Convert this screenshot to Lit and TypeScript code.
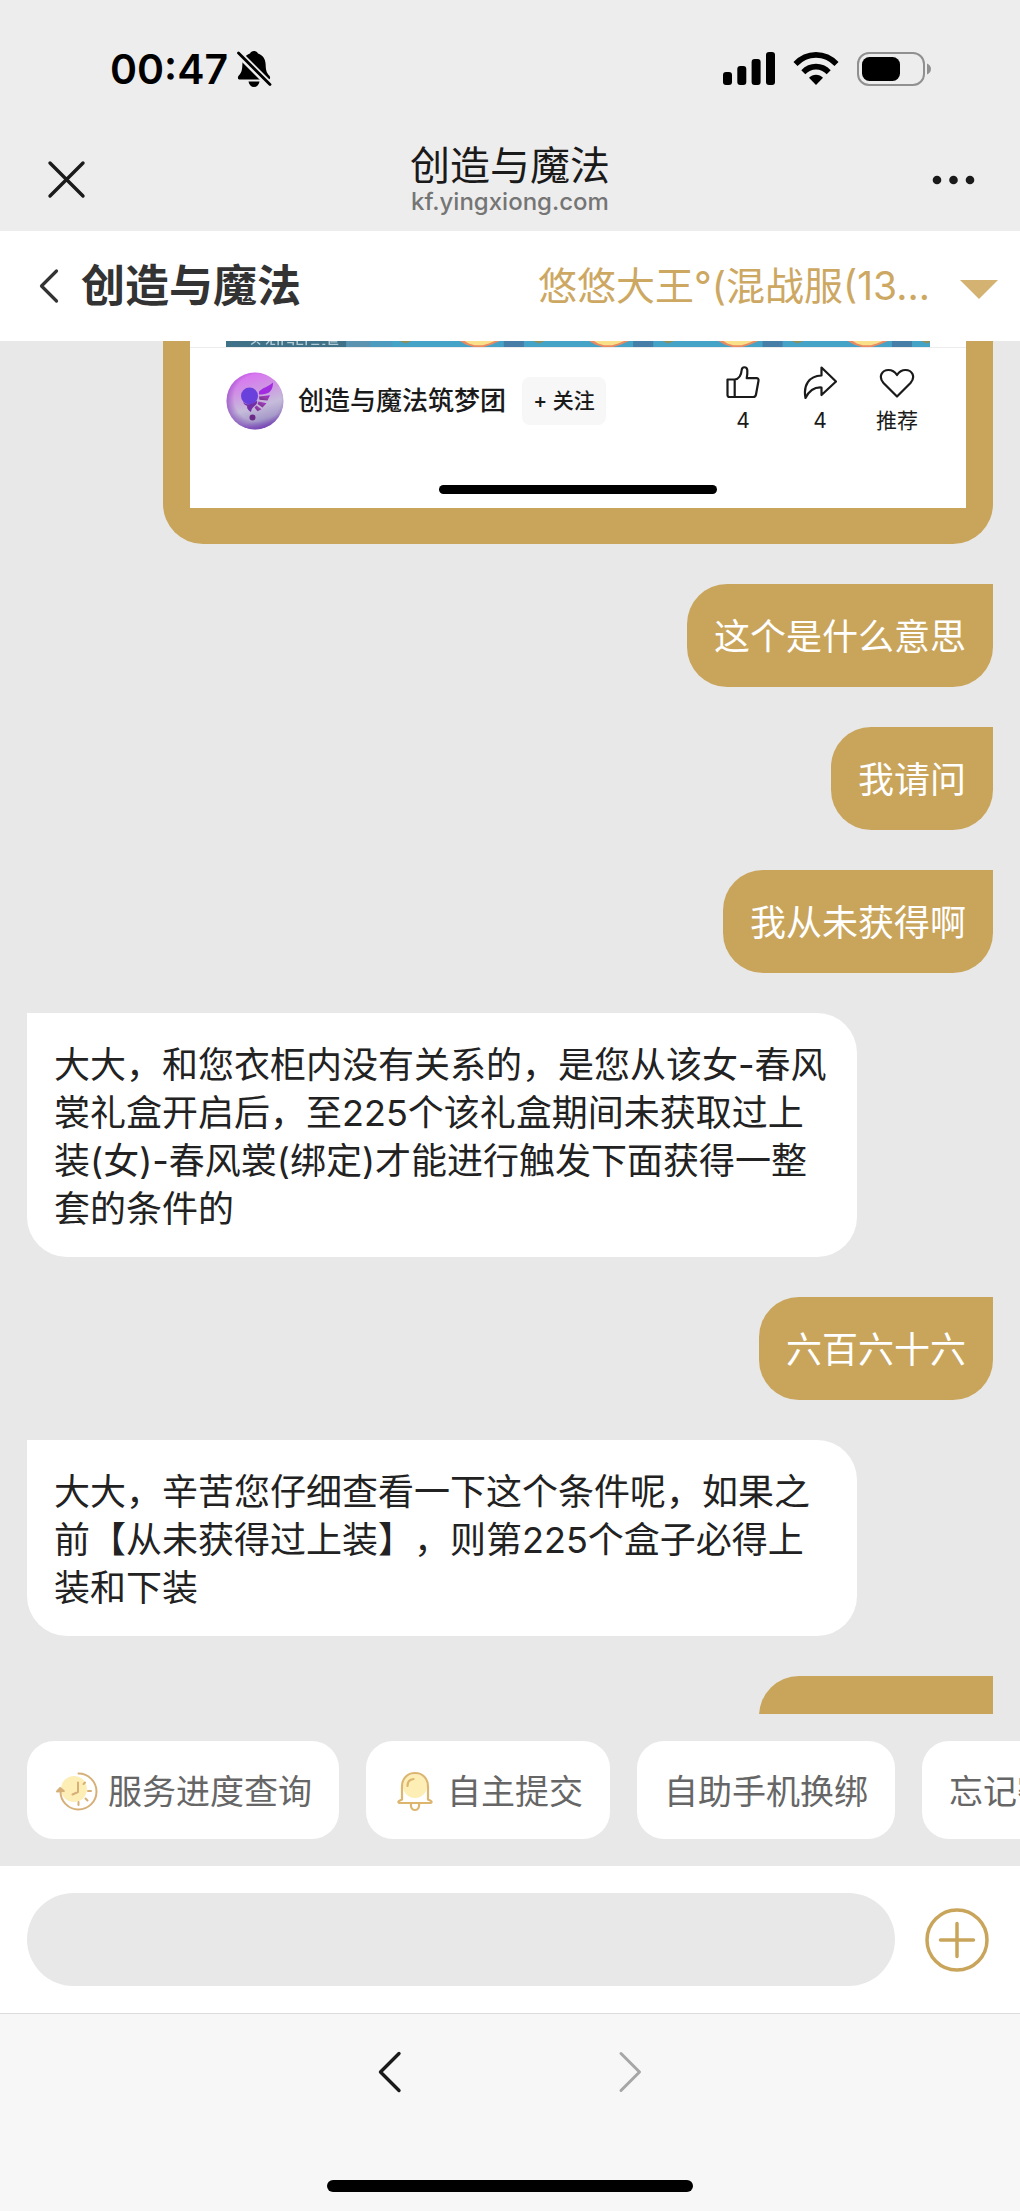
import { LitElement, html, css, svg, nothing } from "lit";
import { customElement, property } from "lit/decorators.js";

const fontStack = css`Inter, "Noto Sans CJK SC", "Liberation Sans", sans-serif`;

const reset = css`
  * {
    box-sizing: border-box;
  }
  button {
    appearance: none;
    border: 0;
    margin: 0;
    padding: 0;
    background: none;
    color: inherit;
    font: inherit;
    cursor: pointer;
  }
  svg {
    display: block;
    flex: none;
  }
`;

@customElement("status-bar")
export class StatusBar extends LitElement {
  static styles = [
    reset,
    css`
      :host {
        display: flex;
        align-items: center;
        justify-content: space-between;
        height: 138px;
        padding: 0 88px 0 110px;
        color: #000;
      }
      .left,
      .right {
        display: flex;
        align-items: center;
      }
      .left {
        gap: 8px;
      }
      .right {
        gap: 18px;
      }
      .time {
        font-size: 41px;
        line-height: 48px;
        font-weight: 600;
      }
    `,
  ];

  render() {
    return html`
      <div class="left">
        <span class="time">00:47</span>
        <svg width="36" height="38" viewBox="0 0 36 38" aria-hidden="true">
          <path d="M18 1c-2 0-3.400 1-4 2.400C9 5 6.600 9 6.400 14c-.2 6-.8 8.500-3.600 11.500C1.500 27 1.300 29.600 4 29.600h28c2.700 0 2.500-2.600 1.200-4.100-2.800-3-3.400-5.500-3.600-11.500C29.400 9 27 5 22 3.400 21.400 2 20 1 18 1z" />
          <path d="M12.500 31.500h11C23 35 20.800 37 18 37s-5-2-5.500-5.500z" />
          <path d="M-1 0L36 37" stroke="#ededed" stroke-width="7" />
          <path d="M2.500 3L34 34.500" stroke="#000" stroke-width="2.800" stroke-linecap="round" />
        </svg>
      </div>
      <div class="right">
        <svg width="52" height="34" viewBox="0 0 52 34" aria-hidden="true">
          <rect x="0" y="20" width="9" height="13" rx="3" />
          <rect x="14.300" y="14" width="9" height="19" rx="3" />
          <rect x="28.600" y="7" width="9" height="26" rx="3" />
          <rect x="43" y="0" width="9" height="33" rx="3" />
        </svg>
        <svg width="46" height="34" viewBox="0 0 46 34" aria-hidden="true">
          <g fill="none" stroke="#000" stroke-width="5.600">
            <path d="M2.500 12C14-.2 32-.2 43.500 12" />
            <path d="M10.300 20.200C17.500 12.800 28.500 12.800 35.700 20.200" />
          </g>
          <path d="M23 33l-7-7.200c3.800-4.200 10.200-4.200 14 0z" />
        </svg>
        <svg width="75" height="34" viewBox="0 0 75 34" aria-hidden="true">
          <rect x="1" y="1" width="66" height="32" rx="11" fill="none" stroke="#909090" stroke-width="2" />
          <rect x="5" y="5" width="38" height="24" rx="7.500" />
          <path d="M70 11.500c2.500 1 4 3 4 5.500s-1.500 4.500-4 5.500z" fill="#909090" />
        </svg>
      </div>
    `;
  }
}

@customElement("browser-bar")
export class BrowserBar extends LitElement {
  static styles = [
    reset,
    css`
      :host {
        display: grid;
        grid-template-columns: 1fr auto 1fr;
        align-items: center;
        height: 93px;
        padding: 0 44px 10px;
        color: #1a1a1a;
      }
      .center {
        display: flex;
        flex-direction: column;
        align-items: center;
      }
      .title {
        margin: 0;
        font-size: 40px;
        line-height: 44px;
        font-weight: 400;
      }
      .domain {
        font-size: 24px;
        line-height: 28px;
        font-weight: 500;
        color: #757575;
      }
      .more {
        justify-self: end;
      }
    `,
  ];

  render() {
    return html`
      <button aria-label="关闭">
        <svg width="44" height="44" viewBox="0 0 44 44">
          <path d="M6 5l33 33M39 5L6 38" stroke="#1a1a1a" stroke-width="3.400" stroke-linecap="round" />
        </svg>
      </button>
      <div class="center">
        <h1 class="title">创造与魔法</h1>
        <span class="domain">kf.yingxiong.com</span>
      </div>
      <button class="more" aria-label="更多">
        <svg width="44" height="44" viewBox="0 0 44 44">
          <circle cx="5" cy="22" r="4.300" fill="#1a1a1a" />
          <circle cx="21.500" cy="22" r="4.300" fill="#1a1a1a" />
          <circle cx="38" cy="22" r="4.300" fill="#1a1a1a" />
        </svg>
      </button>
    `;
  }
}

@customElement("chat-header")
export class ChatHeader extends LitElement {
  static styles = [
    reset,
    css`
      :host {
        display: flex;
        align-items: center;
        justify-content: space-between;
        height: 110px;
        padding: 0 22px 0 37px;
        background: #fff;
      }
      .back {
        display: flex;
        align-items: center;
        gap: 20px;
      }
      .name {
        font-size: 44px;
        line-height: 56px;
        font-weight: 700;
        color: #333;
      }
      .account {
        display: flex;
        align-items: center;
        gap: 30px;
        font-size: 39px;
        line-height: 56px;
        font-weight: 400;
        color: #cda863;
      }
      .account svg {
        margin-top: 5px;
      }
    `,
  ];

  render() {
    return html`
      <button class="back">
        <svg width="24" height="36" viewBox="0 0 24 36" aria-hidden="true">
          <path d="M19.500 3L4.500 18l15 15" fill="none" stroke="#333" stroke-width="3.200" stroke-linecap="round" stroke-linejoin="round" />
        </svg>
        <span class="name">创造与魔法</span>
      </button>
      <button class="account">
        <span>悠悠大王°(混战服(13...</span>
        <svg width="38" height="20" viewBox="0 0 38 20" aria-hidden="true">
          <path d="M0 1h38L19 20z" fill="#d3b272" />
        </svg>
      </button>
    `;
  }
}

@customElement("shared-post")
export class SharedPost extends LitElement {
  static styles = [
    reset,
    css`
      :host {
        display: block;
        padding-bottom: 14px;
        background: #fff;
        color: #1a1a1a;
      }
      .banner {
        border-bottom: 1px solid #ececec;
        padding: 0 36px;
      }
      .banner svg {
        width: 100%;
        height: 6px;
      }
      .row {
        display: flex;
        align-items: center;
        padding: 12px 36px 0;
        height: 93px;
      }
      .author {
        margin-left: 14px;
        font-size: 26px;
        line-height: 36px;
        font-weight: 500;
      }
      .follow {
        margin-left: 16px;
        width: 84px;
        height: 48px;
        border-radius: 8px;
        background: #f7f7f7;
        font-size: 21px;
        line-height: 48px;
        font-weight: 500;
      }
      .actions {
        display: flex;
        gap: 11px;
        margin-left: auto;
      }
      .action {
        display: flex;
        flex-direction: column;
        align-items: center;
        gap: 6px;
        width: 66px;
        font-size: 21px;
        line-height: 32px;
        font-weight: 400;
      }
      .home {
        width: 278px;
        height: 9px;
        margin: 44px auto 0;
        border-radius: 5px;
        background: #000;
      }
    `,
  ];

  private banner() {
    const flames = [253, 382, 511, 640];
    return svg`
      <rect width="702" height="7" fill="#46a3c8" />
      <rect width="120" height="7" fill="#3f7288" />
      <rect x="120" width="24" height="7" fill="#5b93b0" />
      <rect x="144" width="22" height="7" fill="#4d9cc0" />
      ${flames.map(
        (x) => svg`
          <path d="M${x - 20} 0h40l-8 4-8 3h-10l-8-3z" fill="#e98a63" />
          <path d="M${x - 15} 0h30l-6 3-6 2h-8l-6-2z" fill="#fbe08a" />
          <rect x="${x + 24}" width="20" height="7" fill="#467ea8" />
          <path d="M${x + 53} 0h12l-6 3z" fill="#8f8f5a" />`
      )}
      <path d="M173 0h12l-6 3z" fill="#8f8f5a" />
      <path d="M25 4l5-4m4 4l-3-3m9 3l3-4m2 0v4h4m3-4v5m4-5v5m5-3h6v3m4-5v4h6m3-4v5m5-1h8m3 0h3m4-4v4h9m-8-3h7" fill="none" stroke="#b4cbd3" stroke-width="1.500" />
    `;
  }

  render() {
    return html`
      <div class="banner">
        <svg viewBox="0 0 702 7" preserveAspectRatio="none" aria-hidden="true">${this.banner()}</svg>
      </div>
      <div class="row">
        <svg width="58" height="58" viewBox="0 0 58 58" aria-hidden="true">
          <defs>
            <linearGradient id="orb" x1="0.350" y1="0" x2="0.650" y2="1">
              <stop offset="0" stop-color="#dc70f4" />
              <stop offset="0.300" stop-color="#cf92e4" />
              <stop offset="0.600" stop-color="#c6bcda" />
              <stop offset="0.820" stop-color="#a79cc9" />
              <stop offset="1" stop-color="#6d48b0" />
            </linearGradient>
            <radialGradient id="glow" cx="0.550" cy="0.450" r="0.550">
              <stop offset="0.750" stop-color="#7b2fb5" stop-opacity="0" />
              <stop offset="1" stop-color="#7a35b8" stop-opacity="0.500" />
            </radialGradient>
            <linearGradient id="wing" x1="0" y1="1" x2="1" y2="0">
              <stop offset="0" stop-color="#6b2a86" />
              <stop offset="0.600" stop-color="#9a3fae" />
              <stop offset="1" stop-color="#a21cf0" />
            </linearGradient>
          </defs>
          <circle cx="29" cy="29" r="28.500" fill="url(#orb)" />
          <circle cx="29" cy="29" r="28.500" fill="url(#glow)" />
          <circle cx="23.500" cy="24" r="8.500" fill="#6a40dc" />
          <path d="M17 30c4 3.500 9 3 14-1.500 1 4-2.500 5-4.500 7.500-1 1.300-1.200 2.500-1.500 4-2.500-1.500-4.500-3.500-3.800-6-2-.8-3.500-2-4.200-4z" fill="#722fa8" />
          <path d="M33 19.500c4-4 9-4.500 14-9 0 4-1 8.500-5 10.500-3 1.300-6 1.500-9 1.500z" fill="#a12ce0" />
          <g fill="url(#wing)">
            <path d="M33 24.500l11-1.200-2.500 5.200-8-.7z" />
            <path d="M32.500 29.500l8 1.800-4 4.200-5-3.500z" />
            <path d="M30.500 33.500l5 3.800-4 2-3-3.800z" />
          </g>
          <circle cx="26.500" cy="45.500" r="3" fill="#6b2a86" />
        </svg>
        <span class="author">创造与魔法筑梦团</span>
        <button class="follow">+ 关注</button>
        <div class="actions">
          <button class="action" aria-label="点赞 4">
            <svg width="34" height="34" viewBox="0 0 34 34">
              <path d="M1.500 14.500h7.200c4.300-.5 6.500-4 7-9.500.2-3.700 5.300-3.700 5.600.2.200 2.800 0 5.500-.6 8h9.800c1.500 0 2.300 1 2 2.500l-2.500 13.800c-.3 1.600-1.200 2.500-2.800 2.500H3.500c-1.200 0-2-.8-2-2zM8.700 14.500V32" fill="none" stroke="#1a1a1a" stroke-width="2.200" stroke-linejoin="round" />
            </svg>
            4
          </button>
          <button class="action" aria-label="分享 4">
            <svg width="34" height="34" viewBox="0 0 34 34">
              <path d="M18.500 2.500L33 16.500 18.500 30V22.500C11 22 6 26 2.500 33 0 20 6 11 18.500 10.500z" fill="none" stroke="#1a1a1a" stroke-width="2.200" stroke-linejoin="round" />
            </svg>
            4
          </button>
          <button class="action">
            <svg width="36" height="34" viewBox="0 0 36 34" aria-hidden="true">
              <path d="M18 31.500L4.500 18C-1 11.500 3 5 9.500 5 13.500 5 16 7 18 10c2-3 4.500-5 8.500-5C33 5 37 11.500 31.500 18z" fill="none" stroke="#1a1a1a" stroke-width="2.200" stroke-linejoin="round" />
            </svg>
            推荐
          </button>
        </div>
      </div>
      <div class="home"></div>
    `;
  }
}

@customElement("chat-bubble")
export class ChatBubble extends LitElement {
  @property({ reflect: true }) side: "mine" | "theirs" = "theirs";

  static styles = [
    reset,
    css`
      :host {
        display: block;
        flex: none;
        max-width: 830px;
        font-size: 36px;
        line-height: 48px;
        text-spacing-trim: space-all;
      }
      :host([side="mine"]) {
        align-self: flex-end;
        padding: 29px 27px 26px;
        border-radius: 40px 0 40px 40px;
        background: #c9a55c;
        color: #fff;
      }
      :host([side="theirs"]) {
        align-self: flex-start;
        padding: 28px 27px 24px;
        border-radius: 0 40px 40px 40px;
        background: #fff;
        color: #222;
      }
    `,
  ];

  render() {
    return html`<slot></slot>`;
  }
}

type Chip = { label: string; icon?: "clock" | "bell" };

@customElement("quick-actions")
export class QuickActions extends LitElement {
  static styles = [
    reset,
    css`
      :host {
        display: flex;
        gap: 27px;
        padding: 27px;
        overflow: hidden;
      }
      .chip {
        display: flex;
        flex: none;
        align-items: center;
        gap: 10px;
        height: 98px;
        padding: 3px 27px 0;
        border-radius: 27px;
        background: #fff;
        font-size: 34px;
        line-height: 48px;
        color: #666;
        white-space: nowrap;
      }
    `,
  ];

  private chips: Chip[] = [
    { label: "服务进度查询", icon: "clock" },
    { label: "自主提交", icon: "bell" },
    { label: "自助手机换绑" },
    { label: "忘记密码" },
  ];

  private icon(name?: Chip["icon"]) {
    if (name === "clock") {
      return html`<svg width="44" height="44" viewBox="0 0 44 44" aria-hidden="true">
        <circle cx="20" cy="19" r="13" fill="#fdeeb5" />
        <g fill="none" stroke="#d6b078" stroke-width="2" stroke-linecap="round" stroke-linejoin="round">
          <path d="M24.500 3.500A18 18 0 1 1 6.500 21" />
          <path d="M3 21.500l3.200-3.500 3.600 3z" fill="#d6b078" />
          <path d="M24 12.500V22l-5.500 2.500M31 12.500l-1.500 1.500M37 21h-3M33.500 30.500l-2-2M24.500 35V32" />
        </g>
      </svg>`;
    }
    if (name === "bell") {
      return html`<svg width="44" height="44" viewBox="0 0 44 44" aria-hidden="true">
        <circle cx="22" cy="16" r="12" fill="#fdeeb5" />
        <g fill="none" stroke="#dcb56f" stroke-width="2.200" stroke-linecap="round" stroke-linejoin="round">
          <path d="M9 29.500V16.500C9 8.500 14.500 3 22 3s13 5.500 13 13.500v13l3 1.500c1 .8.600 2-.8 2H6.800c-1.400 0-1.800-1.200-.8-2z" />
          <path d="M18 33.500c-.5 4 1 6.500 4 6.500s4.500-2.500 4-6.500M14.500 16c0-4 2.500-6.500 6-7" />
        </g>
      </svg>`;
    }
    return nothing;
  }

  render() {
    return this.chips.map(
      (c) => html`<button class="chip">${this.icon(c.icon)}<span>${c.label}</span></button>`
    );
  }
}

@customElement("message-composer")
export class MessageComposer extends LitElement {
  static styles = [
    reset,
    css`
      :host {
        display: flex;
        align-items: center;
        gap: 29px;
        padding: 27px 30px 27px 27px;
        background: #fff;
      }
      .field {
        flex: 1;
        min-width: 0;
        height: 93px;
        padding: 0 40px;
        border: 0;
        border-radius: 47px;
        outline: 0;
        background: #e8e8e8;
        font: inherit;
        font-size: 36px;
      }
    `,
  ];

  render() {
    return html`
      <input class="field" type="text" aria-label="消息" />
      <button aria-label="添加">
        <svg width="66" height="66" viewBox="0 0 66 66">
          <g fill="none" stroke="#c9a55c" stroke-width="3.500" stroke-linecap="round">
            <circle cx="33" cy="33" r="30" />
            <path d="M33 16.500v33M16.500 33h33" />
          </g>
        </svg>
      </button>
    `;
  }
}

@customElement("browser-footer")
export class BrowserFooter extends LitElement {
  static styles = [
    reset,
    css`
      :host {
        display: flex;
        flex-direction: column;
        align-items: center;
        justify-content: space-between;
        height: 198px;
        padding: 34px 0 19px;
        border-top: 1px solid #dcdcdc;
        background: #f7f7f7;
      }
      .nav {
        display: flex;
        gap: 192px;
      }
      .home {
        width: 366px;
        height: 12px;
        border-radius: 6px;
        background: #000;
      }
    `,
  ];

  render() {
    return html`
      <nav class="nav">
        <button aria-label="后退">
          <svg width="48" height="48" viewBox="0 0 48 48">
            <path d="M33 5.500L14.500 24 33 42.500" fill="none" stroke="#1a1a1a" stroke-width="3.400" stroke-linecap="round" stroke-linejoin="round" />
          </svg>
        </button>
        <button aria-label="前进">
          <svg width="48" height="48" viewBox="0 0 48 48">
            <path d="M15 5.500L33.500 24 15 42.500" fill="none" stroke="#a6a6a6" stroke-width="3" stroke-linecap="round" stroke-linejoin="round" />
          </svg>
        </button>
      </nav>
      <div class="home"></div>
    `;
  }
}

@customElement("app-root")
export class AppRoot extends LitElement {
  static styles = [
    reset,
    css`
      :host {
        display: flex;
        flex-direction: column;
        height: 100vh;
        overflow: hidden;
        background: #ededed;
        font-family: ${fontStack};
      }
      .thread {
        display: flex;
        flex: 1;
        flex-direction: column;
        gap: 40px;
        min-height: 0;
        padding: 0 27px;
        overflow: hidden;
        background: #e8e8e8;
      }
      .thread .shared {
        width: 100%;
        padding: 0 27px 36px;
        border-radius: 0 0 40px 40px;
      }
      .next {
        width: 234px;
        height: 103px;
      }
      .actions {
        background: #e8e8e8;
      }
    `,
  ];

  render() {
    return html`
      <status-bar></status-bar>
      <browser-bar></browser-bar>
      <chat-header></chat-header>
      <main class="thread">
        <chat-bubble side="mine" class="shared"><shared-post></shared-post></chat-bubble>
        <chat-bubble side="mine">这个是什么意思</chat-bubble>
        <chat-bubble side="mine">我请问</chat-bubble>
        <chat-bubble side="mine">我从未获得啊</chat-bubble>
        <chat-bubble side="theirs">大大，和您衣柜内没有关系的，是您从该女-春风裳礼盒开启后，至225个该礼盒期间未获取过上装(女)-春风裳(绑定)才能进行触发下面获得一整套的条件的</chat-bubble>
        <chat-bubble side="mine">六百六十六</chat-bubble>
        <chat-bubble side="theirs">大大，辛苦您仔细查看一下这个条件呢，如果之前【从未获得过上装】，则第225个盒子必得上装和下装</chat-bubble>
        <chat-bubble side="mine" class="next"></chat-bubble>
      </main>
      <quick-actions class="actions"></quick-actions>
      <message-composer></message-composer>
      <browser-footer></browser-footer>
    `;
  }
}
